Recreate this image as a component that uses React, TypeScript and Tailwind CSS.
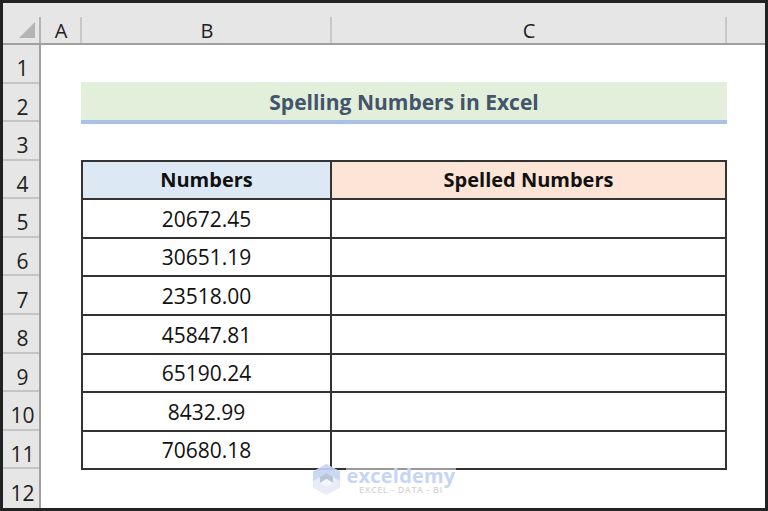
import React from 'react'

const rowNumbers = [1, 2, 3, 4, 5, 6, 7, 8, 9, 10, 11, 12]
const values = ['20672.45', '30651.19', '23518.00', '45847.81', '65190.24', '8432.99', '70680.18']

// -------------------------------------------------------------
// Column header strip
// -------------------------------------------------------------
function ColumnHeaders() {
  return (
    <div className="flex h-[42px] shrink-0 border-b-2 border-[#a0a0a0] bg-[#e6e6e6] text-[20px] text-[#222]">
      <div className="mt-[14px] flex w-[38px] items-end justify-end border-r-2 border-[#b4b4b4] pb-1 pr-[3px]">
        <svg width="18" height="18" viewBox="0 0 18 18">
          <polygon points="17,1 17,17 1,17" fill="#b4b4b4" />
        </svg>
      </div>
      <div className="mt-[14px] flex w-[41px] items-center justify-center border-r-2 border-[#c8c8c8] pl-px pt-[2px]">A</div>
      <div className="mt-[14px] flex w-[250px] items-center justify-center border-r-2 border-[#c8c8c8] pl-[2px] pt-[2px]">B</div>
      <div className="mt-[14px] flex w-[395px] items-center justify-center border-r-2 border-[#c8c8c8] pl-px pt-[2px]">C</div>
      <div className="flex-1" />
    </div>
  )
}

// -------------------------------------------------------------
// Row header gutter
// -------------------------------------------------------------
function RowHeaders() {
  return (
    <div className="grid w-[38px] shrink-0 grid-rows-12 border-r-2 border-[#a0a0a0] bg-[#e6e6e6] text-[21px] text-[#222]">
      {rowNumbers.map((n) => (
        <div key={n} className="flex items-center justify-center border-b-2 border-[#c4c4c4] pl-[3px] pt-[11px] last:border-b-0">
          {n}
        </div>
      ))}
    </div>
  )
}

// -------------------------------------------------------------
// Table
// -------------------------------------------------------------
function NumbersTable() {
  return (
    <div className="col-span-2 col-start-2 row-span-8 row-start-4 -my-px grid grid-cols-[249px_1fr] grid-rows-8 border-x-2 border-t-2 border-[#333] text-[21px] text-[#111]">
      <div className="flex items-center justify-center border-b-2 border-r-2 border-[#333] bg-[#dce9f5] text-[20px] font-bold">
        Numbers
      </div>
      <div className="flex items-center justify-center border-b-2 border-[#333] bg-[#fce4d6] text-[20px] font-bold">
        Spelled Numbers
      </div>
      {values.map((v) => (
        <React.Fragment key={v}>
          <div className="flex items-center justify-center border-b-2 border-r-2 border-[#333] pt-[2px]">{v}</div>
          <div className="border-b-2 border-[#333]" />
        </React.Fragment>
      ))}
    </div>
  )
}

// -------------------------------------------------------------
// Watermark
// -------------------------------------------------------------
function Watermark() {
  return (
    <div className="absolute left-[310px] top-[461px] flex items-start gap-[6px]">
      <svg width="27" height="31" viewBox="0 0 27 31" className="opacity-90">
        <polygon points="13.5,0 27,7.5 27,23.5 13.5,31 0,23.5 0,7.5" fill="#e6ebf6" />
        <polygon points="13.5,0 27,7.5 27,17 20,13 13.5,9 7,13 0,17 0,7.5" fill="#c6d4f2" />
        <polygon points="13.5,9 20,13 20,19 13.5,15 7,19 7,13" fill="#b4bfd4" />
        <polygon points="7,19 13.5,15 20,19 13.5,23" fill="#f4f6fb" />
      </svg>
      <div className="flex w-[110px] flex-col items-center bg-white/50">
        <span className="pt-[2px] text-[20px] font-bold leading-[20px] tracking-[0.2px] text-[#c6d5f5]">exceldemy</span>
        <span className="text-[9px] font-semibold leading-[7px] tracking-[0.6px] text-[#d6d6d6]">
          EXCEL - DATA - BI
        </span>
      </div>
    </div>
  )
}

export default function App() {
  return (
    <div className="relative flex h-[511px] w-[768px] flex-col overflow-hidden border-[3px] border-[#222] bg-white font-['Open_Sans',sans-serif]">
      <ColumnHeaders />
      <div className="flex min-h-0 flex-1">
        <RowHeaders />
        <div className="grid flex-1 grid-cols-[40px_249px_397px_1fr] grid-rows-12">
          <div className="col-span-2 col-start-2 row-start-2 -mb-[2px] -mt-[2px] flex items-center justify-center border-b-4 border-[#a9c0e8] bg-[#e2efda] pt-[4px] text-[21px] font-bold text-[#44546a]">
            Spelling Numbers in Excel
          </div>
          <NumbersTable />
        </div>
      </div>
      <Watermark />
    </div>
  )
}
